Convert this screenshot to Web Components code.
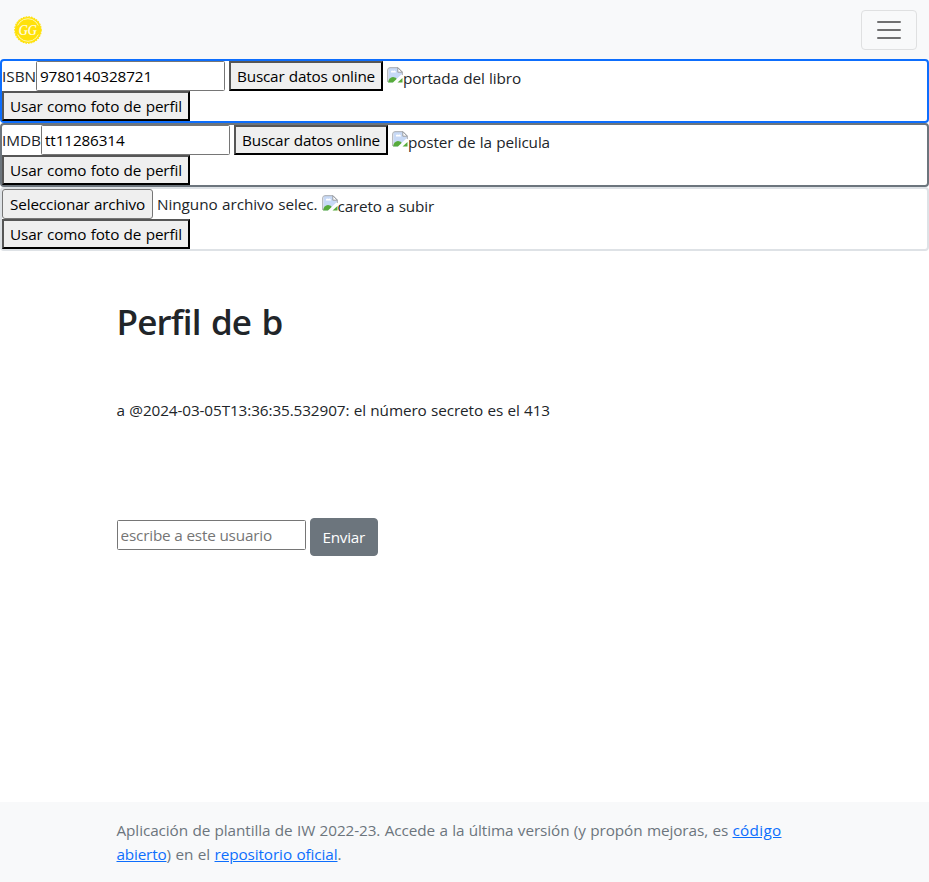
<!DOCTYPE html>
<html lang="es">
<head>
<meta charset="utf-8">
<title>Perfil</title>
<style>
html,body{margin:0;height:100%}
body{background:#fff;color:#212529;font:15.3px/24px "Open Sans","Noto Sans",sans-serif;word-spacing:.5px;overflow:hidden}
</style>
</head>
<body>
<profile-page></profile-page>
<script>
const define = (name, html, setup) => customElements.define(name, class extends HTMLElement {
  connectedCallback() {
    if (this.shadowRoot) return;
    this.attachShadow({mode: 'open'}).innerHTML = html;
    if (setup) setup.call(this, this.shadowRoot);
  }
});

/* Text run tracked so that it fills the width given in its w attribute. */
define('fit-text', `<style>:host{display:inline-block;white-space:pre}span{display:inline-block}</style><span><slot></slot></span>`, function (root) {
  const span = root.querySelector('span');
  const w = +this.getAttribute('w');
  const n = this.textContent.length;
  const natural = span.getBoundingClientRect().width;
  span.style.letterSpacing = ((w - natural) / n) + 'px';
  this.style.width = w + 'px';
});

define('brand-logo', `<style>:host{display:block;width:28px;height:28px}svg{display:block}
text{font:italic 15.5px "Liberation Serif",serif;fill:#fffef0;stroke:#fffef0;stroke-width:.2}</style>
<svg width="28" height="28" viewBox="0 0 28 28">
<circle cx="14" cy="14" r="13.1" fill="#ffe10a"/><circle cx="14" cy="14" r="13.2" fill="none" stroke="#ffe10a" stroke-width="1.2" stroke-dasharray="1.7 1"/>
<circle cx="14" cy="14" r="11.3" fill="none" stroke="#fff9b8" stroke-width=".9"/>
<path d="M2 9.5h2.5v9H2zM23.5 9.5H26v9h-2.5z" fill="#ffe10a"/>
<text x="4.8" y="19.2" textLength="18" lengthAdjust="spacingAndGlyphs">GG</text></svg>`);

define('menu-toggle', `<style>:host{display:block}
button{display:flex;align-items:center;justify-content:center;box-sizing:border-box;width:56px;height:40px;padding:0;border:1px solid #dfe0e1;border-radius:4px;background:none}
svg{display:block}</style>
<button aria-label="Menú"><svg width="30" height="30" viewBox="0 0 30 30" fill="none" stroke="rgba(0,0,0,.55)" stroke-width="2" stroke-linecap="round"><path d="M4 7h22M4 15h22M4 23h22"/></svg></button>`);

define('top-bar', `<style>:host{display:flex;box-sizing:border-box;height:59px;padding:0 12px 0 14px;align-items:center;justify-content:space-between;background:#f8f9fa}
brand-logo{margin-top:1px}menu-toggle{margin-top:1px}</style>
<brand-logo></brand-logo><menu-toggle></menu-toggle>`);

define('text-field', `<style>:host{display:block}
input{display:block;box-sizing:border-box;width:189px;height:30px;padding:1px 2px 1px 3px;border:1px solid #767676;border-radius:1.5px;background:#fff;color:#000;font:inherit;letter-spacing:var(--track,0);outline:0}
input::placeholder{color:#757575;opacity:1}</style><input type="text">`, function (root) {
  const input = root.querySelector('input');
  input.value = this.getAttribute('value') || '';
  input.placeholder = this.getAttribute('placeholder') || '';
});

define('push-button', `<style>:host{display:block}
button{display:flex;align-items:center;box-sizing:border-box;height:30px;padding:0 6px;background:#efefef;color:#000;font:inherit;word-spacing:.5px;border:2px solid;border-color:#565656 #000 #000 #565656;border-radius:0}
:host([kind=file]) button{border:1px solid #767676;border-radius:3px;padding:0 7px}
:host([kind=solid]) button{border:1px solid #6c757d;border-radius:4px;padding:0 12px;height:38px;background:#6c757d;color:#fff}</style>
<button><slot></slot></button>`);

define('missing-image', `<style>:host{display:flex;align-items:center;height:24px;padding-top:4px;margin-left:4px}svg{display:block;flex:none;margin-top:-7px}</style>
<svg width="16" height="16" viewBox="0 0 16 16">
<path d="M1.5 2.5Q1.5.5 3.5.5H11l4.5 4.5v3.5L8 15.5H2.5q-1 0-1-1z" fill="#c7d9f6"/>
<path d="M4 5.5a1.4 1.4 0 0 1 2.2-1.6A1.8 1.8 0 0 1 9 5.5z" fill="#fff"/>
<path d="M1 15q1-4.5 5-5 3.2 0 4.5 2.8L7.5 15.5H1z" fill="#57ab3b"/>
<path d="M6.5 16L15.5 7.5" stroke="#fff" stroke-width="1.6"/>
<path d="M10.5 15.5l5-4.5v4.5z" fill="#57ab3b"/>
<path d="M.7 15V3Q.7.7 3 .7h8l4.3 4.3v3" fill="none" stroke="#a9acb0"/>
<path d="M10.8.7v4.5h4.5z" fill="#fff" stroke="#9b9ea3"/></svg><slot></slot>`);

define('photo-source', `<style>:host{display:flex;flex-direction:column;align-items:flex-start;box-sizing:border-box;height:64px;border:2px solid var(--edge);border-radius:4px}
.row{display:flex;align-items:center;height:30px}</style>
<div class="row"><slot></slot></div>
<push-button><fit-text w="172">Usar como foto de perfil</fit-text></push-button>`);

define('profile-main', `<style>:host{display:block;box-sizing:border-box;width:720px;margin:0 auto;padding:49px 12px 0}
h1{margin:0;font-size:35px;line-height:43px;font-weight:550;word-spacing:2px}
p{margin:55px 0 0}form{display:flex;align-items:flex-start;gap:4px;margin-top:96px}
text-field{margin-top:2px;--track:-.18px}</style>
<h1><fit-text w="166">Perfil de b</fit-text></h1>
<p><fit-text w="433.5">a @2024-03-05T13:36:35.532907: el número secreto es el 413</fit-text></p>
<form><text-field placeholder="escribe a este usuario"></text-field>
<push-button kind="solid"><fit-text w="42.5">Enviar</fit-text></push-button></form>`);

define('page-footer', `<style>:host{display:block;box-sizing:border-box;height:80px;padding:16px 0;background:#f8f9fa;color:#6c757d}
div{box-sizing:border-box;width:720px;margin:0 auto;padding:0 12px;white-space:nowrap}
a{color:#0d6efd;text-decoration:underline}
p{display:flex;margin:0}fit-text{text-decoration:inherit}</style>
<div><p><fit-text w="616">Aplicación de plantilla de IW 2022-23. Accede a la última versión (y propón mejoras, es </fit-text><a href="#"><fit-text w="49">código</fit-text></a></p>
<p><a href="#"><fit-text w="50">abierto</fit-text></a><fit-text w="48">) en el </fit-text><a href="#"><fit-text w="123">repositorio oficial</fit-text></a><span>.</span></p></div>`,
function (root) {
  root.querySelectorAll('a fit-text').forEach(t => { t.style.textDecoration = 'underline'; t.shadowRoot.querySelector('span').style.textDecoration = 'underline'; });
});

define('profile-page', `<style>:host{display:flex;flex-direction:column;min-height:882px}
page-footer{margin-top:auto}push-button{margin-left:4px}.file{margin-left:0}.status{margin-left:4px}
.blue{--edge:#0d6efd}.gray{--edge:#6c757d}.light{--edge:#dee2e6}</style>
<top-bar></top-bar>
<photo-source class="blue"><fit-text w="34">ISBN</fit-text><text-field value="9780140328721" style="--track:-.13px"></text-field>
<push-button><fit-text w="138">Buscar datos online</fit-text></push-button><missing-image><fit-text w="118">portada del libro</fit-text></missing-image></photo-source>
<photo-source class="gray"><fit-text w="39">IMDB</fit-text><text-field value="tt11286314" style="--track:-.13px"></text-field>
<push-button><fit-text w="138">Buscar datos online</fit-text></push-button><missing-image><fit-text w="142">poster de la pelicula</fit-text></missing-image></photo-source>
<photo-source class="light"><push-button class="file" kind="file"><fit-text w="135">Seleccionar archivo</fit-text></push-button>
<fit-text class="status" w="160.5">Ninguno archivo selec.</fit-text><missing-image><fit-text w="96.5">careto a subir</fit-text></missing-image></photo-source>
<profile-main></profile-main>
<page-footer></page-footer>`);
</script>
</body>
</html>
